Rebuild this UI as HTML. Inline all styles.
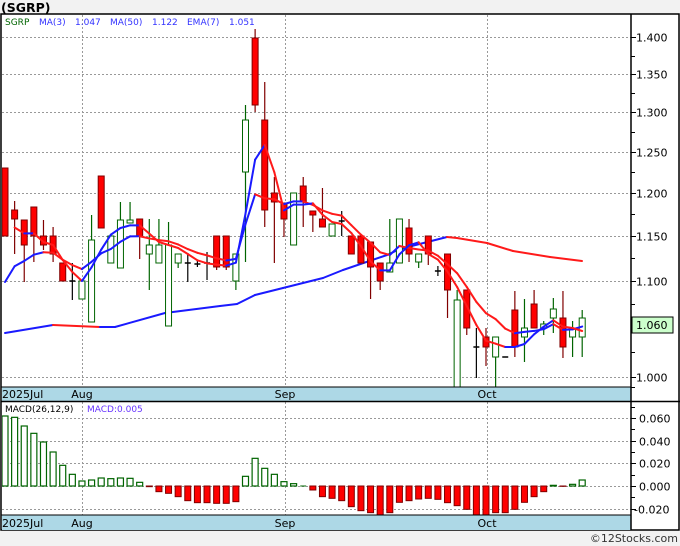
<!DOCTYPE html>
<html><head><meta charset="utf-8"><style>
html,body{margin:0;padding:0;background:#f2f2f2;width:680px;height:546px;overflow:hidden}
svg{display:block}
text{font-family:"DejaVu Sans","Liberation Sans",sans-serif}
</style></head><body>
<svg id="s" width="680" height="546" xmlns="http://www.w3.org/2000/svg">
<rect x="0" y="0" width="680" height="546" fill="#f2f2f2"/>
<text x="1" y="12" font-size="12.5" font-weight="bold" fill="#000">(SGRP)</text>
<rect x="1" y="14" width="678" height="516" fill="#fff" stroke="#000" stroke-width="1.5"/>
<defs><clipPath id="cm"><rect x="2" y="15" width="629" height="372"/></clipPath>
<clipPath id="cd"><rect x="2" y="402" width="629" height="113"/></clipPath></defs>
<g id="grid"></g>
<g id="main" clip-path="url(#cm)"></g>
<g id="macd" clip-path="url(#cd)"></g>
<rect x="2" y="387" width="629" height="14" fill="#add8e6"/>
<rect x="2" y="515" width="629" height="15" fill="#add8e6"/>
<line x1="1" y1="387" x2="631" y2="387" stroke="#000"/>
<line x1="1" y1="401.5" x2="680" y2="401.5" stroke="#000" stroke-width="1.5"/>
<line x1="1" y1="515" x2="631" y2="515" stroke="#000"/>
<line x1="631" y1="14" x2="631" y2="530" stroke="#000" stroke-width="1.5"/>
<g font-size="11" fill="#000">
<text x="2" y="398">2025Jul</text><text x="82" y="398" text-anchor="middle">Aug</text><text x="285" y="398" text-anchor="middle">Sep</text><text x="487" y="398" text-anchor="middle">Oct</text>
<text x="2" y="527">2025Jul</text><text x="82" y="527" text-anchor="middle">Aug</text><text x="285" y="527" text-anchor="middle">Sep</text><text x="487" y="527" text-anchor="middle">Oct</text>
</g>
<g font-size="9">
<text x="5" y="25" fill="#006400">SGRP</text>
<text x="39" y="25" fill="#3333ff">MA(3)</text><text x="75" y="25" fill="#3333ff">1.047</text>
<text x="110" y="25" fill="#3333ff">MA(50)</text><text x="152" y="25" fill="#3333ff">1.122</text>
<text x="187" y="25" fill="#3333ff">EMA(7)</text><text x="229" y="25" fill="#3333ff">1.051</text>
<text x="5" y="412" fill="#000">MACD(26,12,9)</text>
<text x="87" y="412" fill="#6633ff">MACD:0.005</text>
</g>
<g id="axis" font-size="11" fill="#000"></g>
<rect x="632" y="317" width="41" height="16" fill="#ccffcc" stroke="#000"/>
<text x="636" y="329" font-size="11">1.060</text>
<text x="678" y="542" font-size="11" fill="#333" text-anchor="end">©12Stocks.com</text>
</svg>
<script>
var NS="http://www.w3.org/2000/svg";
function el(p,t,a){var e=document.createElementNS(NS,t);for(var k in a)e.setAttribute(k,a[k]);document.getElementById(p).appendChild(e);return e;}
function py(p){return 377-Math.log(p)*1009;}
function my(v){return 486-v*1133;}
// grid
[1.4,1.35,1.3,1.25,1.2,1.15,1.1,1.05,1.0].forEach(function(p){var y=Math.round(py(p))+.5;
 if(p!=1.05)el("grid","line",{x1:2,y1:y,x2:631,y2:y,stroke:"#999","stroke-dasharray":"2,2"});
 if(p!=1.05){var t=el("axis","text",{x:636,y:y+4});t.textContent=p.toFixed(3);}
 el("axis","line",{x1:631,y1:y,x2:636,y2:y,stroke:"#000"});
 var y2=Math.round(py(p+0.025))+.5; if(p<1.4)el("axis","line",{x1:631,y1:y2,x2:635,y2:y2,stroke:"#000"});
});
el("axis","line",{x1:631,y1:387.5,x2:635,y2:387.5,stroke:"#000"});
[0.06,0.04,0.02,0,-0.02].forEach(function(v){var y=Math.round(my(v))+.5;
 el("grid","line",{x1:2,y1:y,x2:631,y2:y,stroke:"#999","stroke-dasharray":"2,2"});
 el("axis","line",{x1:631,y1:y,x2:636,y2:y,stroke:"#000"});
 var t=el("axis","text",{x:v<0?634:639,y:y+4});t.textContent=v.toFixed(3);
 var y2=Math.round(my(v+0.01))+.5;el("axis","line",{x1:631,y1:y2,x2:635,y2:y2,stroke:"#000"});
});
[82.5,285.5,487.5].forEach(function(x){el("grid","line",{x1:x,y1:15,x2:x,y2:387,stroke:"#999","stroke-dasharray":"2,2"});el("grid","line",{x1:x,y1:402,x2:x,y2:515,stroke:"#999","stroke-dasharray":"2,2"});});
var D=[[168,236,168,236],[210,219,201,254],[220,245,220,282],[207,236,207,262],[236,245,220,250],[236,254,227,262],[263,281,263,281],[281,281,263,300],[299,281,281,299],[322,240,215,322],[176,228,176,228],[263,236,236,263],[268,220,202,268],[223,220,202,223],[219,236,219,259],[254,245,219,290],[263,245,219,263],[326,245,222,326],[263,254,254,268],[263,263,253,282],[264,264,261,267],[263,263,252,280],[236,267,236,270],[236,267,236,270],[281,254,254,290],[172,120,105,262],[38,105,29,112],[120,210,82,227],[193,202,177,263],[203,219,203,237],[245,193,193,245],[186,202,177,227],[211,215,211,232],[219,227,188,227],[236,224,224,236],[221,221,211,236],[236,254,236,254],[236,263,236,263],[242,267,242,299],[263,281,263,290],[272,263,219,272],[263,219,219,263],[228,254,219,262],[262,254,254,268],[236,254,236,265],[271,271,266,276],[254,290,254,318],[395,300,290,395],[290,328,290,335],[347,347,328,378],[337,347,328,366],[357,337,337,388],[357,357,357,357],[310,347,291,357],[337,328,299,362],[304,328,290,328],[328,324,321,335],[318,309,298,333],[318,347,291,358],[337,328,321,357],[337,318,310,357]];
function X(i){return 5+i*9.62;}
// MA50 line
var M50=[[5,333],[53,325],[100,327],[115,327],[165,313],[220,306],[237,304],[255,295],[283,288],[323,278],[343,270],[387,255],[400,249],[447,237],[457,238],[487,243],[513,251],[550,257],[582,261]];
function seg(g,pts){for(var i=1;i<pts.length;i++){var a=pts[i-1],b=pts[i];el(g,"line",{x1:a[0],y1:a[1],x2:b[0],y2:b[1],stroke:b[1]>a[1]+0.3?"#ff1a1a":"#1a1aff","stroke-width":2,"stroke-linecap":"round"});}}
seg("main",M50);
// candles
D.forEach(function(d,i){var x=X(i),o=d[0],c=d[1],h=d[2],l=d[3];
 var up=c<o,dn=c>o,col=up?"#006400":dn?"#800000":"#000";
 var top=Math.min(o,c),bot=Math.max(o,c);
 el("main","line",{x1:x,y1:h,x2:x,y2:l,stroke:col,"stroke-width":1.2});
 if(bot-top<1){el("main","line",{x1:x-3,y1:top,x2:x+3,y2:top,stroke:col,"stroke-width":1.5});}
 else el("main","rect",{x:x-3,y:top,width:6,height:bot-top,fill:up?"#fff":"#ff0000",stroke:col,"stroke-width":1});
});
// MA3 and EMA7
var C=D.map(function(d){return d[1];});
var ma=[],em=[],e=282;
for(var i=0;i<C.length;i++){
 if(i>=1){var s=0,n=0;for(var j=Math.max(0,i-2);j<=i;j++){s+=C[j];n++;}ma.push([X(i),s/n]);}
 if(i>0)e=e+(C[i]-e)*0.25;em.push([X(i),e]);
}
seg("main",em);seg("main",ma);
// MACD
var T=[108,112,138,160,186,216,256,283,303,300,294,296,294,295,307,320,335,340,350,362,368,368,370,370,365,289,235,265,283,305,311,318,330,350,355,362,380,392,398,406,398,367,362,357,355,358,368,377,388,405,410,398,398,388,367,350,335,316,319,313,300];
T.forEach(function(t,i){var x=X(i),y=380+t/3,z=486;
 if(t<318){el("macd","rect",{x:x-3,y:y,width:6,height:z-y,fill:t>314?"#006400":"#fff",stroke:"#006400","stroke-width":1.2});}
 else if(t>318){el("macd","rect",{x:x-3,y:z,width:6,height:y-z,fill:"#ff0000",stroke:"#800000","stroke-width":1});}
 else el("macd","line",{x1:x-3,y1:z,x2:x+3,y2:z,stroke:"#006400"});
});
</script>
</body></html>
